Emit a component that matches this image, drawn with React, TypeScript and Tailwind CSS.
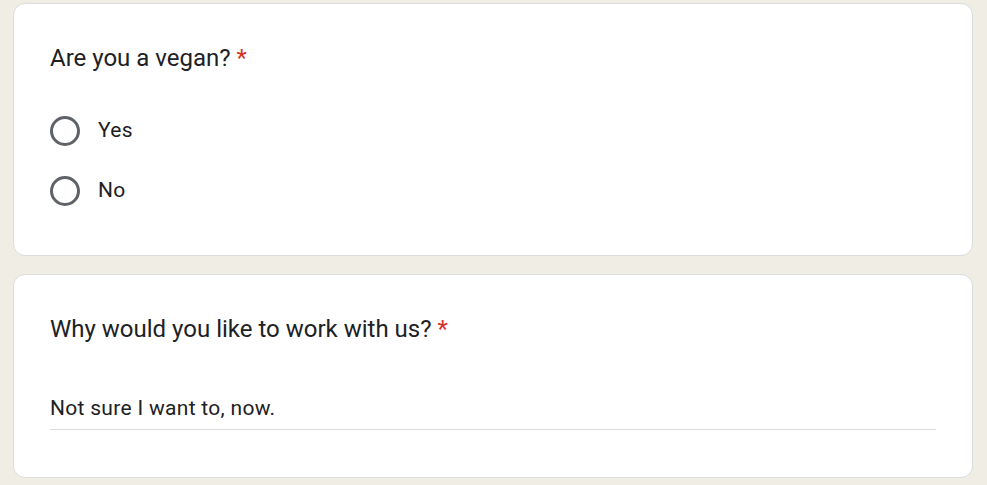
const font = { fontFamily: "Roboto, 'Liberation Sans', sans-serif" };

function Title({ children }: { children: string }) {
  return (
    <div className="text-[24px] leading-[36px] tracking-[0px] text-[#202124]">
      {children} <span className="text-[#d93025]">*</span>
    </div>
  );
}

function Radio({ label }: { label: string }) {
  return (
    <div className="flex h-[60px] items-center">
      <div className="h-[30px] w-[30px] shrink-0 rounded-full border-[3px] border-[#5f6368]" />
      <span className="ml-[18px] text-[21px] tracking-[0.3px] text-[#202124]">{label}</span>
    </div>
  );
}

export default function App() {
  return (
    <div className="min-h-[485px] w-[987px] bg-[#f0ede4] pt-[3px] pl-[13px]" style={font}>
      <div className="w-[960px] rounded-[12px] border border-[#dadce0] bg-white px-[36px] pt-[36px] pb-[34px]">
        <Title>Are you a vegan?</Title>
        <div className="mt-[25px]">
          <Radio label="Yes" />
          <Radio label="No" />
        </div>
      </div>

      <div className="mt-[18px] w-[960px] rounded-[12px] border border-[#dadce0] bg-white px-[36px] pt-[36px] pb-[47px]">
        <Title>Why would you like to work with us?</Title>
        <div className="mt-[46px] border-b border-[#dadce0] pb-[6px] text-[21px] leading-[30px] tracking-[0.3px] text-[#202124]">
          Not sure I want to, now.
        </div>
      </div>
    </div>
  );
}
